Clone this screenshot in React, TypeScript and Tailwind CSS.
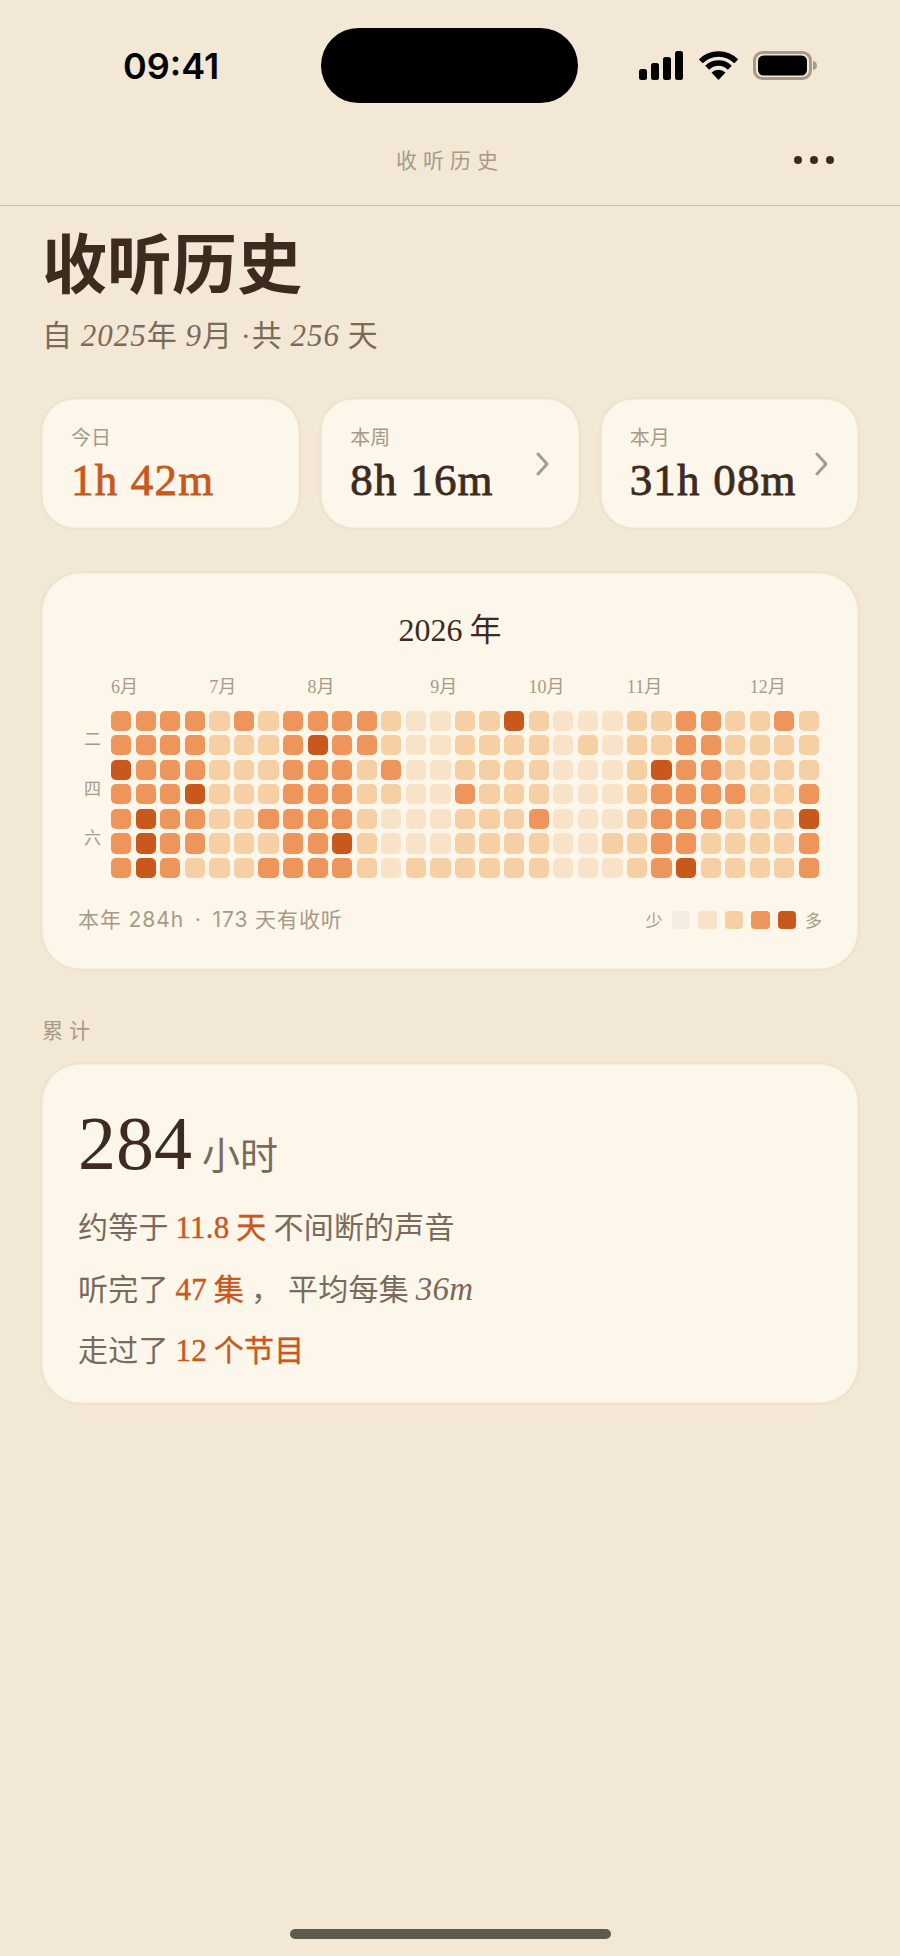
const levels = ['bg-[#f3ece0]', 'bg-[#f8e2c8]', 'bg-[#f6cfa5]', 'bg-[#ee955c]', 'bg-[#c9581c]'];

const rows = [
  '33332323333211224211122332232',
  '33332223433211222212122332222',
  '43332223332311222211124332222',
  '33342223332211322211123333223',
  '34332233332111222311123332224',
  '34332223342111222211223322223',
  '34322233332122222211123422223',
];

const months = [
  { label: '6月', col: 'col-start-1' },
  { label: '7月', col: 'col-start-5' },
  { label: '8月', col: 'col-start-9' },
  { label: '9月', col: 'col-start-14' },
  { label: '10月', col: 'col-start-18' },
  { label: '11月', col: 'col-start-22' },
  { label: '12月', col: 'col-start-27' },
];

function Serif({ children, className = '' }: { children: React.ReactNode; className?: string }) {
  return <span className={`font-['Liberation_Serif','Noto_Sans_CJK_SC',serif] ${className}`}>{children}</span>;
}

function StatCard({ label, value, accent, arrow }: { label: string; value: string; accent?: boolean; arrow?: boolean }) {
  return (
    <div className="flex-1 h-[129px] rounded-[32px] border border-[#f8eedf] bg-[#fdf6ea] shadow-[0_0_3px_rgba(120,90,50,0.14)] px-[28px] flex items-center justify-between">
      <div className="flex flex-col">
        <span className="text-[20px] leading-[28px] text-[#a89a88]">{label}</span>
        <span
          className={`mt-[4px] text-[45px] leading-[50px] tracking-[1.2px] whitespace-nowrap font-['Liberation_Serif',serif] [-webkit-text-stroke:0.8px_currentColor] ${
            accent ? 'text-[#c9581c]' : 'text-[#3d2b1f]'
          }`}
        >
          {value}
        </span>
      </div>
      {arrow && (
        <svg width="14" height="24" viewBox="0 0 14 24" fill="none" className="shrink-0 text-[#a89a88]">
          <path d="M2 2l9 10-9 10" stroke="currentColor" strokeWidth="3" strokeLinecap="round" strokeLinejoin="round" />
        </svg>
      )}
    </div>
  );
}

export default function App() {
  return (
    <div className="w-[900px] h-[1956px] bg-[#f2e8d5] flex flex-col font-['Noto_Sans_CJK_SC',sans-serif] overflow-hidden">
      {/* status bar */}
      <div className="h-[103px] pt-[28px] flex items-center">
        <div className="w-[321px] pl-[123px] text-[36px] font-semibold leading-none text-black font-['Inter',sans-serif]">
          09:41
        </div>
        <div className="w-[257px] h-[75px] rounded-[38px] bg-black" />
        <div className="pl-[61px] flex items-center">
          <svg width="44" height="29" viewBox="0 0 44 29" fill="black">
            <rect x="0" y="18" width="8" height="11" rx="2.5" />
            <rect x="12" y="12" width="8" height="17" rx="2.5" />
            <rect x="24" y="6" width="8" height="23" rx="2.5" />
            <rect x="36" y="0" width="8" height="29" rx="2.5" />
          </svg>
          <svg width="39" height="29" viewBox="0 0 39 29" fill="none" className="ml-[16px]">
            <path d="M1.8 10.3A25 25 0 0 1 37.2 10.3" stroke="black" strokeWidth="5.5" />
            <path d="M8.2 16.7A16 16 0 0 1 30.8 16.7" stroke="black" strokeWidth="5.5" />
            <path d="M19.5 29L12.5 21.5A10 10 0 0 1 26.5 21.5Z" fill="black" />
          </svg>
          <svg width="64" height="29" viewBox="0 0 64 29" fill="none" className="ml-[15px]">
            <rect x="1.5" y="1.5" width="56" height="26" rx="8" stroke="#a89a88" strokeWidth="3" />
            <rect x="5" y="4.5" width="49" height="20" rx="5.5" fill="black" />
            <path d="M60 10c2.5.5 4 2.2 4 4.5s-1.5 4-4 4.5z" fill="#a89a88" />
          </svg>
        </div>
      </div>

      {/* nav */}
      <div className="h-[103px] pt-[12px] border-b border-[#c9bdab] grid grid-cols-3 items-center">
        <div />
        <div className="text-center text-[21px] tracking-[6px] text-[#a89a88]">收听历史</div>
        <div className="flex justify-end gap-[8px] pr-[66px]">
          <span className="w-[8px] h-[8px] rounded-full bg-[#3d2b1f]" />
          <span className="w-[8px] h-[8px] rounded-full bg-[#3d2b1f]" />
          <span className="w-[8px] h-[8px] rounded-full bg-[#3d2b1f]" />
        </div>
      </div>

      {/* body */}
      <div className="px-[42px] flex flex-col">
        <h1 className="mt-[18px] text-[65px] leading-[72px] font-bold text-[#3d2b1f]">收听历史</h1>
        <p className="mt-[17px] text-[30px] leading-[40px] tracking-[1px] text-[#7a6a5a] whitespace-nowrap">
          自 <Serif className="italic text-[31px]">2025</Serif>年 <Serif className="italic text-[31px]">9</Serif>月 <Serif>·</Serif>共{' '}
          <Serif className="italic text-[31px]">256</Serif> 天
        </p>

        <div className="mt-[43px] flex gap-[22px]">
          <StatCard label="今日" value="1h 42m" accent />
          <StatCard label="本周" value="8h 16m" arrow />
          <StatCard label="本月" value="31h 08m" arrow />
        </div>

        {/* heat map */}
        <div className="mt-[45px] h-[396px] rounded-[38px] border border-[#f8eedf] bg-[#fdf6ea] shadow-[0_0_3px_rgba(120,90,50,0.14)] pt-[33px] px-[35px]">
          <div className="text-center text-[32px] leading-[40px] text-[#3d2b1f]">
            <Serif>2026</Serif> 年
          </div>
          <div className="mt-[25px] flex">
            <div className="w-[33px] shrink-0 pl-[6px] pt-[38px] flex flex-col text-[17px] text-[#a89a88]">
              <span className="h-[49.5px] flex items-center">二</span>
              <span className="h-[49.5px] flex items-center">四</span>
              <span className="h-[49.5px] flex items-center">六</span>
            </div>
            <div>
              <div className="grid grid-cols-[repeat(29,20.3px)] gap-x-[4.27px] h-[24px] mb-[11.5px] text-[18px] leading-[24px] text-[#a89a88]">
                {months.map((m) => (
                  <span key={m.label} className={`${m.col} whitespace-nowrap font-['Liberation_Serif','Noto_Sans_CJK_SC',serif]`}>
                    {m.label}
                  </span>
                ))}
              </div>
              <div className="grid grid-cols-[repeat(29,20.3px)] gap-[4.27px]">
                {rows.flatMap((row, r) =>
                  row.split('').map((v, c) => (
                    <div key={`${r}-${c}`} className={`h-[20.3px] rounded-[5px] ${levels[Number(v)]}`} />
                  )),
                )}
              </div>
            </div>
          </div>
          <div className="mt-[27px] h-[30px] flex items-center justify-between">
            <span className="text-[21px] tracking-[0.9px] text-[#a89a88] font-['Inter','Noto_Sans_CJK_SC',sans-serif]">
              本年 284h<span className="mx-[4px]"> · </span>173 天有收听
            </span>
            <div className="flex items-center text-[17px] text-[#a89a88]">
              <span className="mr-[9px]">少</span>
              <div className="flex gap-[8px]">
                {levels.map((l) => (
                  <span key={l} className={`w-[18.5px] h-[18.5px] rounded-[4px] ${l}`} />
                ))}
              </div>
              <span className="ml-[9px]">多</span>
            </div>
          </div>
        </div>

        <div className="mt-[46px] text-[21px] leading-[28px] tracking-[6px] text-[#a89a88]">累计</div>

        {/* totals */}
        <div className="mt-[21px] h-[339px] rounded-[38px] border border-[#f8eedf] bg-[#fdf6ea] shadow-[0_0_3px_rgba(120,90,50,0.14)] pt-[36px] px-[35px]">
          <div className="flex items-baseline h-[84px]">
            <span className="text-[76px] leading-[84px] text-[#3d2b1f] font-['Liberation_Serif',serif]">284</span>
            <span className="ml-[10px] text-[38px] text-[#7a6a5a]">小时</span>
          </div>
          <div className="mt-[10px] flex flex-col text-[30px] leading-[61.5px] tracking-[0.2px] text-[#7a6a5a] whitespace-nowrap">
            <p className="h-[61.5px]">
              约等于{' '}
              <span className="text-[#c9581c] [-webkit-text-stroke:0.4px_currentColor]">
                <Serif className="text-[31px]">11.8</Serif> 天
              </span>{' '}
              不间断的声音
            </p>
            <p className="h-[61.5px]">
              听完了{' '}
              <span className="text-[#c9581c] [-webkit-text-stroke:0.4px_currentColor]">
                <Serif className="text-[31px]">47</Serif> 集
              </span>{' '}
              ， 平均每集 <Serif className="italic text-[33px]">36m</Serif>
            </p>
            <p className="h-[61.5px]">
              走过了{' '}
              <span className="text-[#c9581c] [-webkit-text-stroke:0.4px_currentColor]">
                <Serif className="text-[31px]">12</Serif> 个节目
              </span>
            </p>
          </div>
        </div>
      </div>

      <div className="mt-auto pb-[17px] flex justify-center">
        <div className="w-[321px] h-[10px] rounded-full bg-[#5d5a4e]" />
      </div>
    </div>
  );
}
